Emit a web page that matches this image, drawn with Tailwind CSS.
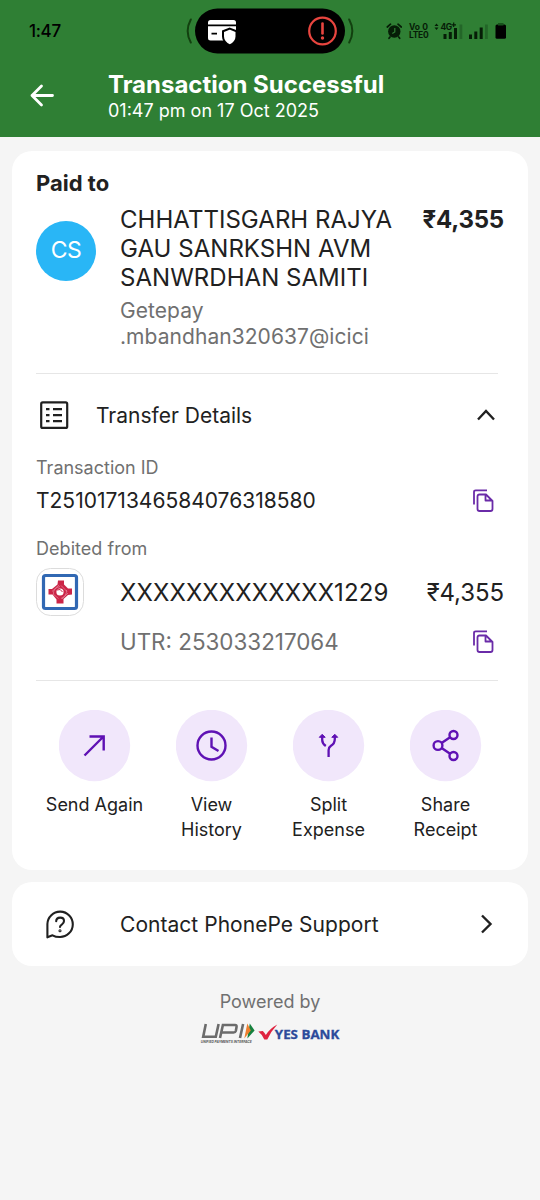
<!DOCTYPE html>
<html lang="en">
<head>
<meta charset="utf-8">
<title>Transaction Successful</title>
<script src="https://cdn.jsdelivr.net/npm/@tailwindcss/browser@4"></script>
</head>
<body class="bg-[#f5f5f5] font-['Inter','Noto_Sans',sans-serif] text-[#212121] w-[540px] h-[1200px] overflow-hidden whitespace-nowrap">
<header class="bg-[#2f7f34] h-[137px] flex flex-col">
  <div class="h-[62px] flex items-center text-black">
    <span class="ml-[29px] w-[157px] text-[17px] font-medium leading-none tracking-[-0.3px]">1:47</span>
    <svg class="w-[168px] h-[50px]" viewBox="186 6 168 50" fill="none">
      <path d="M190.800 19.500Q184.500 31 190.800 42.500M349.200 19.500Q355.500 31 349.200 42.500" stroke="#12400f" stroke-width="2" stroke-linecap="round"/>
      <rect x="195" y="8.500" width="150" height="45" rx="22.500" fill="#000"/>
      <rect x="208" y="20" width="28" height="20.500" rx="2.500" fill="#fff"/>
      <path d="M208 25.300H236M211.500 33.700H217" stroke="#000" stroke-width="1.700"/>
      <path d="M229.800 28.600L236.500 31.200V36.500Q236.500 42 229.800 45.500Q223 42 223 36.500V31.200Z" fill="#fff" stroke="#000" stroke-width="2"/>
      <circle cx="322.500" cy="31" r="13.300" stroke="#e8453f" stroke-width="2.200"/>
      <path d="M322.500 23.500V33.500" stroke="#e8453f" stroke-width="2.600" stroke-linecap="round"/>
      <circle cx="322.500" cy="38" r="1.700" fill="#e8453f"/>
    </svg>
    <svg class="ml-[32px] w-[16px] h-[18px]" viewBox="0 0 16 18" fill="none">
      <circle cx="8.300" cy="9.500" r="6.200" fill="#061d07"/>
      <path d="M1.300 5L4.500 2.200M15.300 5L12 2.200M4 15L3 16.300M12.700 15L13.700 16.300" stroke="#061d07" stroke-width="1.700" stroke-linecap="round"/>
      <path d="M8.800 6V10L6.300 11.500" stroke="#2f7f34" stroke-width="1.200"/>
    </svg>
    <div class="ml-[7px] w-[21px] text-[8.5px] leading-[8px] font-bold text-[#061d07]"><div class="flex justify-between"><span>Vo</span><span class="mr-[2px]">0</span></div><div class="tracking-[-0.3px]">LTE0</div></div>
    <svg class="ml-[3px] w-[74px] h-[22px]" viewBox="433 20 74 22">
      <path d="M434.500 26L436.500 23.500L438.500 26ZM434.500 27.500L436.500 30L438.500 27.500Z" fill="#061d07"/>
      <text x="440.500" y="29.500" font-size="8.500" font-weight="700" letter-spacing="-.4" fill="#061d07">4G</text>
      <path d="M451.500 24.800H456M453.700 22.600V27" stroke="#061d07" stroke-width="1.200"/>
      <path d="M443.500 34H446.500V39H443.500ZM448.800 32H451.800V39H448.800ZM454 28H457V39H454Z" fill="#061d07"/>
      <path d="M459.500 24.500H462.300V39H459.500ZM485 24.500H487.800V39H485Z" fill="#236628"/>
      <path d="M469 34.500H472V39H469ZM474.300 31.500H477.300V39H474.300ZM479.700 27.500H482.700V39H479.700Z" fill="#061d07"/>
      <rect x="495.500" y="24.500" width="10.500" height="14.300" rx="1.500" fill="#000"/><rect x="498" y="23" width="5.500" height="2.500" fill="#17521b"/>
    </svg>
  </div>
  <div class="flex text-white pt-[8px]">
    <svg class="ml-[28px] mt-[10px] w-[30px] h-[30px]" viewBox="28 80 30 30" fill="none" stroke="#fff" stroke-width="2.800" stroke-linecap="round" stroke-linejoin="round"><path d="M52.500 95.500H32M41.500 86L32 95.500L41.500 105"/></svg>
    <div class="ml-[50px]">
      <h1 class="text-[24px] leading-[29px] font-bold"><span>Transaction Successful</span></h1>
      <p class="text-[18px] leading-[24px]"><span>01:47 pm on 17 Oct 2025</span></p>
    </div>
  </div>
</header>
<main class="px-[12px] pt-[14px]">
  <section class="bg-white rounded-[20px] h-[719px] px-[24px] pt-[18px]">
    <h2 class="h-[28px] leading-[28px] text-[22px] font-bold"><span>Paid to</span></h2>
    <div class="flex h-[176px] pt-[8px]">
      <div class="mt-[15.5px] size-[60px] rounded-full bg-[#29b6f6] text-white text-[23px] tracking-[-0.5px] flex items-center justify-center">CS</div>
      <div class="ml-[24px] w-[300px]">
        <p class="text-[24px] leading-[29px] tracking-[0.04px]"><span>CHHATTISGARH RAJYA</span><br><span>GAU SANRKSHN AVM</span><br><span>SANWRDHAN SAMITI</span></p>
        <p class="mt-[6px] text-[21px] leading-[25.5px] tracking-[0.06px] text-[#707070]"><span>Getepay</span><br><span>.mbandhan320637@icici</span></p>
      </div>
      <div class="flex-1 flex justify-end text-[24px] leading-[29px] font-bold tracking-[-0.2px]"><span>₹4,355</span></div>
    </div>
    <div class="h-px w-[462px] bg-[#e6e6e6]"></div>
    <div class="flex items-center h-[83px]">
      <svg class="ml-[3px] w-[30px] h-[30px]" viewBox="39 400.500 30 30" fill="none" stroke="#202020" stroke-width="2.200"><rect x="41.200" y="401.900" width="26" height="25.500" rx="1.500"/><path d="M46 408.600H49.500M46 414.600H49.500M46 420.600H49.500M53 408.600H62M53 414.600H62M53 420.600H62"/></svg>
      <span class="ml-[27px] text-[21px]">Transfer Details</span>
      <svg class="ml-auto mr-[8px] w-[20px] h-[14px]" viewBox="476 408.500 20 14" fill="none" stroke="#202020" stroke-width="2.400"><path d="M478 419L486 410.500L494 419"/></svg>
    </div>
    <div class="h-[22px] leading-[22px] text-[18px] text-[#707070]"><span>Transaction ID</span></div>
    <div class="flex items-center justify-between h-[44px] pr-[8px]">
      <span class="text-[21px]">T2510171346584076318580</span>
      <svg class="w-[24px] h-[26px]" viewBox="0 0 24 26" fill="none" stroke="#6a2ba8" stroke-width="1.800" stroke-linejoin="round"><path d="M2 16.500V4Q2 2.300 3.700 2.300H15M7.500 6.500H14L20.500 13V21Q20.500 23 18.500 23H7.500Q5.500 23 5.500 21V8.500Q5.500 6.500 7.500 6.500ZM13.500 6.500V12.500H20"/></svg>
    </div>
    <div class="mt-[15px] h-[22px] leading-[22px] text-[18px] tracking-[0.04px] text-[#707070]"><span>Debited from</span></div>
    <div class="mt-[8px] flex items-center h-[48px]">
      <svg class="w-[48px] h-[48px]" viewBox="0 0 48 48" fill="none">
        <rect x=".5" y=".5" width="47" height="47" rx="14" fill="#fff" stroke="#dcdcdc"/>
        <rect x="7.500" y="7.500" width="33" height="33" rx="2" stroke="#3168b3" stroke-width="3.200"/>
        <path d="M22 12.500H28V16.500L32 20.500H36V26.500L32 27L27.500 31V35.500H20.500V31.500L16.500 26.500H12.500V21H16L21.500 16.500Z" fill="#cb2547"/>
        <g stroke="#e995a6" stroke-width=".6"><path d="M16 23.500L23 17M17.500 26Q17 20 24 18.500M25 17.500L31 23.500M30.500 22Q31 28 25 30.500M32 25L26 31M22.500 30.500L17 26"/></g>
        <circle cx="24" cy="24" r="3.600" fill="#fff"/><path d="M21 22Q24.500 20 26.500 24" stroke="#cb2547"/>
      </svg>
      <span class="ml-[36px] pt-px text-[24px] tracking-[0.1px]">XXXXXXXXXXXXX1229</span>
      <span class="ml-auto pt-px text-[24px] tracking-[-0.1px]">₹4,355</span>
    </div>
    <div class="flex items-center justify-between h-[52px] pl-[84px] pr-[8px]">
      <span class="text-[22.4px] text-[#707070]">UTR: 253033217064</span>
      <svg class="w-[24px] h-[26px]" viewBox="0 0 24 26" fill="none" stroke="#6a2ba8" stroke-width="1.800" stroke-linejoin="round"><path d="M2 16.500V4Q2 2.300 3.700 2.300H15M7.500 6.500H14L20.500 13V21Q20.500 23 18.500 23H7.500Q5.500 23 5.500 21V8.500Q5.500 6.500 7.500 6.500ZM13.500 6.500V12.500H20"/></svg>
    </div>
    <div class="mt-[12px] h-px w-[462px] bg-[#e6e6e6]"></div>
    <div class="grid grid-cols-4 pt-[29px] text-[18px] leading-[24.5px] text-center">
      <div class="flex flex-col items-center"><svg class="w-[72px] h-[72px]" viewBox="59 710 72 72" fill="none" stroke="#5f11b4" stroke-width="2.400"><circle cx="94.500" cy="745.500" r="35.700" fill="#f1e7fb" stroke="none"/><path d="M84.500 755.500L103.500 736.500M89.500 736.500H103.700V750.500"/></svg><p class="mt-[11px]"><span>Send Again</span></p></div>
      <div class="flex flex-col items-center"><svg class="w-[72px] h-[72px]" viewBox="176 710 72 72" fill="none" stroke="#5f11b4" stroke-width="2.400"><circle cx="211.500" cy="745.500" r="35.700" fill="#f1e7fb" stroke="none"/><circle cx="211.500" cy="745.500" r="14"/><path d="M211.500 737.500V746.800L218.500 751"/></svg><p class="mt-[11px]"><span>View</span><br><span>History</span></p></div>
      <div class="flex flex-col items-center"><svg class="w-[72px] h-[72px]" viewBox="293 710 72 72" fill="none" stroke="#5f11b4" stroke-width="2.300"><circle cx="328.500" cy="745.500" r="35.700" fill="#f1e7fb" stroke="none"/><path d="M328.600 757V750Q328.600 747.300 331 745.800Q334.800 743.500 334.800 739V736M322.200 736V740Q322.200 743.500 325.800 746"/><path d="M319.300 737.300L322.200 734.300L325.200 737.300ZM331.800 737.300L334.800 734.300L337.700 737.300Z" fill="#5f11b4" stroke-width="1"/></svg><p class="mt-[11px]"><span>Split</span><br><span>Expense</span></p></div>
      <div class="flex flex-col items-center"><svg class="w-[72px] h-[72px]" viewBox="410 710 72 72" fill="none" stroke="#5f11b4" stroke-width="2.400"><circle cx="445.500" cy="745.500" r="35.700" fill="#f1e7fb" stroke="none"/><circle cx="438" cy="745.500" r="4.400"/><circle cx="453.500" cy="735" r="4"/><circle cx="453.500" cy="756" r="4"/><path d="M441.600 743L450.100 737.200M441.600 748L450.100 753.800"/></svg><p class="mt-[11px]"><span>Share</span><br><span>Receipt</span></p></div>
    </div>
  </section>
  <section class="mt-[12px] bg-white rounded-[20px] h-[84px] flex items-center px-[24px]">
    <svg class="ml-[9px] w-[30px] h-[30px]" viewBox="45 909 30 30" fill="none" stroke="#202020" stroke-width="2.100" stroke-linecap="round" stroke-linejoin="round"><path d="M47.400 937.300V924A12.700 12.700 0 1 1 60 937Q55.500 937 52.500 935.300ZM56.200 921.300Q56.200 917.600 60.200 917.600Q64 917.600 64 921Q64 923 62 924.300Q60 925.500 60 927"/><circle cx="60" cy="930.800" r=".5"/></svg>
    <span class="ml-[45px] pt-[2px] text-[21px] tracking-[0.04px]">Contact PhonePe Support</span>
    <svg class="ml-auto mr-[9px] w-[16px] h-[22px]" viewBox="479 913 16 22" fill="none" stroke="#202020" stroke-width="2.400"><path d="M482 915.500L490.500 924L482 932.500"/></svg>
  </section>
  <footer class="pt-[25px] flex flex-col items-center">
    <p class="h-[22px] leading-[22px] text-[18px] text-[#707070]"><span>Powered by</span></p>
    <svg class="mt-[7px] w-[142px] h-[26px]" viewBox="199.200 1020 142 26" fill="none">
      <path d="M206 1024L203.400 1036.800H216L218.800 1024M220.200 1038L223.100 1025H235.200Q237.200 1025 236.700 1027.200L236 1031Q235.600 1032.500 233.700 1032.500H222M240.200 1038L243.300 1024" stroke="#6b6b6b" stroke-width="2.600"/>
      <path d="M250 1023.500L254.800 1030.500L247.500 1038.500Z" fill="#16813e"/>
      <path d="M247.500 1023.500L251 1030.500L244.500 1038.500Z" fill="#ee7e2d"/>
      <text x="201" y="1042.600" font-size="3.600" font-weight="700" font-style="italic" textLength="51" lengthAdjust="spacingAndGlyphs" fill="#555">UNIFIED PAYMENTS INTERFACE</text>
      <path d="M258.500 1031.500L263 1031Q265 1033 266 1035Q270 1028.500 277.500 1024.500Q271 1031.500 267.500 1039.500H264.500Q262 1034 258.500 1031.500Z" fill="#df2440"/>
      <text x="275" y="1039.200" font-size="12.600" font-weight="700" font-family="'Open Sans',sans-serif" textLength="64.500" lengthAdjust="spacingAndGlyphs" fill="#2c4a9a" stroke="#2c4a9a" stroke-width=".3">YES BANK</text>
    </svg>
  </footer>
</main>
</body>
</html>
